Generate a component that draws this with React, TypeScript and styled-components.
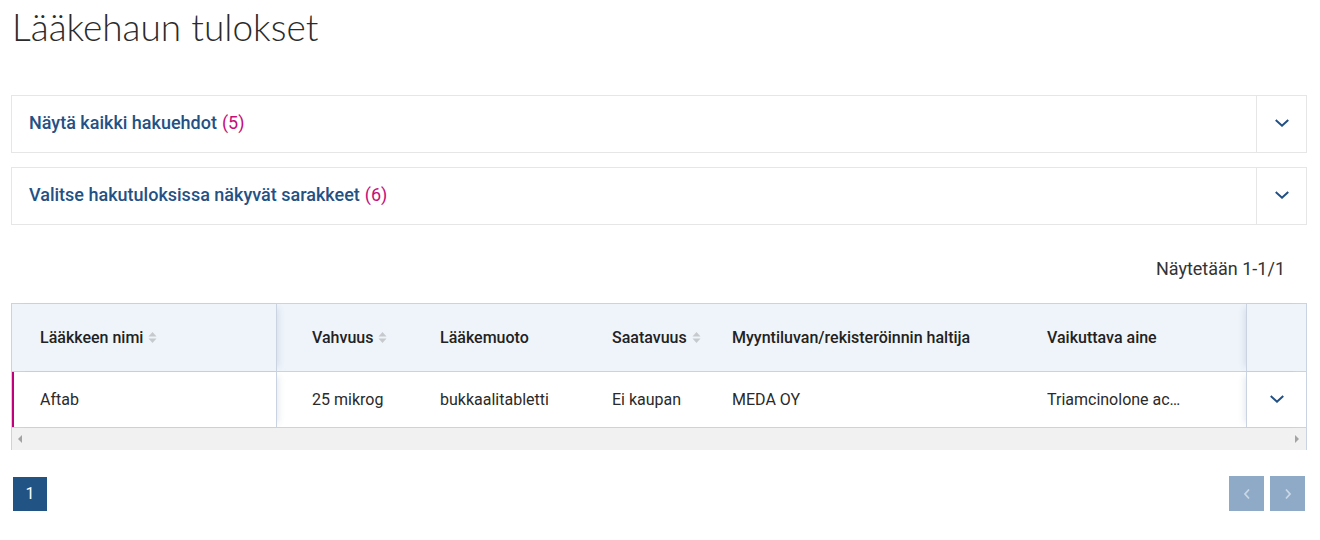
import React from "react";
import styled, { createGlobalStyle } from "styled-components";

const Global = createGlobalStyle`
  html, body { margin: 0; padding: 0; background: #fff; }
  body { font-family: Roboto, "Liberation Sans", Arial, sans-serif; color: #222; }
  * { box-sizing: border-box; }
`;

const Page = styled.div`
  padding: 0 13px 0 11px;
  width: 1320px;
`;

const Title = styled.h1`
  margin: 0;
  padding: 5px 0 0 1px;
  height: 95px;
  font-family: Lato, "Open Sans", sans-serif;
  font-weight: 300;
  font-size: 37px;
  line-height: 44px;
  color: #2b2b2b;
`;

const Accordions = styled.div`
  display: flex;
  flex-direction: column;
  gap: 14px;
`;

const AccordionBox = styled.div`
  display: flex;
  height: 58px;
  border: 1px solid #e6e6e6;
`;

const AccordionTitle = styled.div`
  flex: 1;
  display: flex;
  align-items: center;
  padding: 0 0 4px 17px;
  font-size: 18px;
  font-weight: 500;
  color: #245184;
`;

const Count = styled.span`
  margin-left: 5px;
  font-weight: 400;
  color: #c30f7a;
`;

const ToggleCell = styled.div<{ $w: number }>`
  width: ${(p) => p.$w}px;
  border-left: 1px solid #e6e6e6;
  display: flex;
  align-items: center;
  justify-content: center;
  padding-bottom: 2px;
`;

const Showing = styled.div`
  display: flex;
  justify-content: flex-end;
  align-items: center;
  height: 78px;
  padding: 8px 22px 0 0;
  font-size: 18px;
  color: #333;
`;

const Table = styled.div`
  border: 1px solid #c9d3e1;
  border-bottom: none;
  width: 1296px;
`;

const Row = styled.div<{ $head?: boolean; $mark?: boolean }>`
  display: grid;
  grid-template-columns: 265px 135px 172px 120px 315px 227px 1fr;
  height: ${(p) => (p.$head ? 68 : 56)}px;
  background: ${(p) => (p.$head ? "#eff4fb" : "#fff")};
  border-bottom: 1px solid #c9d3e1;
  box-shadow: ${(p) => (p.$mark ? "inset 2px 0 0 #c2007b" : "none")};
  font-size: 16px;
  font-weight: ${(p) => (p.$head ? 500 : 400)};
  color: ${(p) => (p.$head ? "#222" : "#2a2a2a")};
`;

const Cell = styled.div<{ $pad?: number; $first?: boolean; $sticky?: boolean }>`
  display: flex;
  align-items: center;
  gap: 5px;
  padding-left: ${(p) => p.$pad ?? 28}px;
  padding-bottom: 1px;
  white-space: nowrap;
  overflow: hidden;
  ${(p) =>
    p.$first
      ? `border-right: 1px solid #c9d3e1; box-shadow: 6px 0 6px -4px rgba(60,80,120,0.12);`
      : ""}
  ${(p) =>
    p.$sticky
      ? `border-left: 1px solid #c9d3e1; justify-content: center; padding-left: 0; box-shadow: -6px 0 6px -4px rgba(60,80,120,0.12);`
      : ""}
  svg { flex-shrink: 0; }
`;

const Ellipsis = styled.span`
  display: block;
  overflow: hidden;
  text-overflow: ellipsis;
  max-width: 134px;
`;

const Scrollbar = styled.div`
  height: 22px;
  background: #f1f1f1;
  display: flex;
  justify-content: space-between;
  align-items: center;
  padding: 0 7px 0 6px;
`;

const Arrow = styled.span<{ $dir: "l" | "r" }>`
  width: 0;
  height: 0;
  border-top: 4px solid transparent;
  border-bottom: 4px solid transparent;
  ${(p) =>
    p.$dir === "l"
      ? "border-right: 4px solid #a3a3a3;"
      : "border-left: 4px solid #a3a3a3;"}
`;

const Pager = styled.div`
  display: flex;
  justify-content: space-between;
  align-items: center;
  margin-top: 26px;
  width: 1296px;
  padding: 0 2px 0 2px;
`;

const PageBtn = styled.div`
  width: 34px;
  height: 34px;
  background: #225385;
  color: #fff;
  font-size: 16px;
  display: flex;
  align-items: center;
  justify-content: center;
`;

const NavGroup = styled.div`
  display: flex;
  gap: 6px;
`;

const NavBtn = styled.div`
  width: 35px;
  height: 35px;
  background: #8eaac7;
  display: flex;
  align-items: center;
  justify-content: center;
`;

const Chevron = ({ color = "#1f4f84", size = 14 }: { color?: string; size?: number }) => (
  <svg width={size} height={size * 0.6} viewBox="0 0 14 8" fill="none">
    <path d="M1.5 1.5 L7 6.5 L12.5 1.5" stroke={color} strokeWidth="2" strokeLinecap="square" />
  </svg>
);

const NavChevron = ({ dir }: { dir: "l" | "r" }) => (
  <svg width="8" height="12" viewBox="0 0 8 12" fill="none">
    <path
      d={dir === "l" ? "M6 1.5 L2 6 L6 10.5" : "M2 1.5 L6 6 L2 10.5"}
      stroke="#c9d7e6"
      strokeWidth="1.8"
    />
  </svg>
);

const Sort = () => (
  <svg width="9" height="13" viewBox="0 0 9 13">
    <path d="M4.5 1 L8.5 5.5 H0.5 Z" fill="#c6c9cd" />
    <path d="M4.5 12 L8.5 7.5 H0.5 Z" fill="#c6c9cd" />
  </svg>
);

export default function App() {
  return (
    <Page>
      <Global />
      <Title>Lääkehaun tulokset</Title>
      <Accordions>
        <AccordionBox>
          <AccordionTitle>
            Näytä kaikki hakuehdot<Count>(5)</Count>
          </AccordionTitle>
          <ToggleCell $w={50}>
            <Chevron />
          </ToggleCell>
        </AccordionBox>
        <AccordionBox>
          <AccordionTitle>
            Valitse hakutuloksissa näkyvät sarakkeet<Count>(6)</Count>
          </AccordionTitle>
          <ToggleCell $w={50}>
            <Chevron />
          </ToggleCell>
        </AccordionBox>
      </Accordions>
      <Showing>Näytetään 1-1/1</Showing>
      <Table>
        <Row $head>
          <Cell $first>
            Lääkkeen nimi <Sort />
          </Cell>
          <Cell $pad={35}>
            Vahvuus <Sort />
          </Cell>
          <Cell>Lääkemuoto</Cell>
          <Cell>
            Saatavuus <Sort />
          </Cell>
          <Cell>Myyntiluvan/rekisteröinnin haltija</Cell>
          <Cell>Vaikuttava aine</Cell>
          <Cell $sticky />
        </Row>
        <Row $mark>
          <Cell $first>Aftab</Cell>
          <Cell $pad={35}>25 mikrog</Cell>
          <Cell>bukkaalitabletti</Cell>
          <Cell>Ei kaupan</Cell>
          <Cell>MEDA OY</Cell>
          <Cell>
            <Ellipsis title="Triamcinolone acetonide">Triamcinolone ac…</Ellipsis>
          </Cell>
          <Cell $sticky>
            <Chevron size={14} />
          </Cell>
        </Row>
        <Scrollbar>
          <Arrow $dir="l" />
          <Arrow $dir="r" />
        </Scrollbar>
      </Table>
      <Pager>
        <PageBtn>1</PageBtn>
        <NavGroup>
          <NavBtn>
            <NavChevron dir="l" />
          </NavBtn>
          <NavBtn>
            <NavChevron dir="r" />
          </NavBtn>
        </NavGroup>
      </Pager>
    </Page>
  );
}
